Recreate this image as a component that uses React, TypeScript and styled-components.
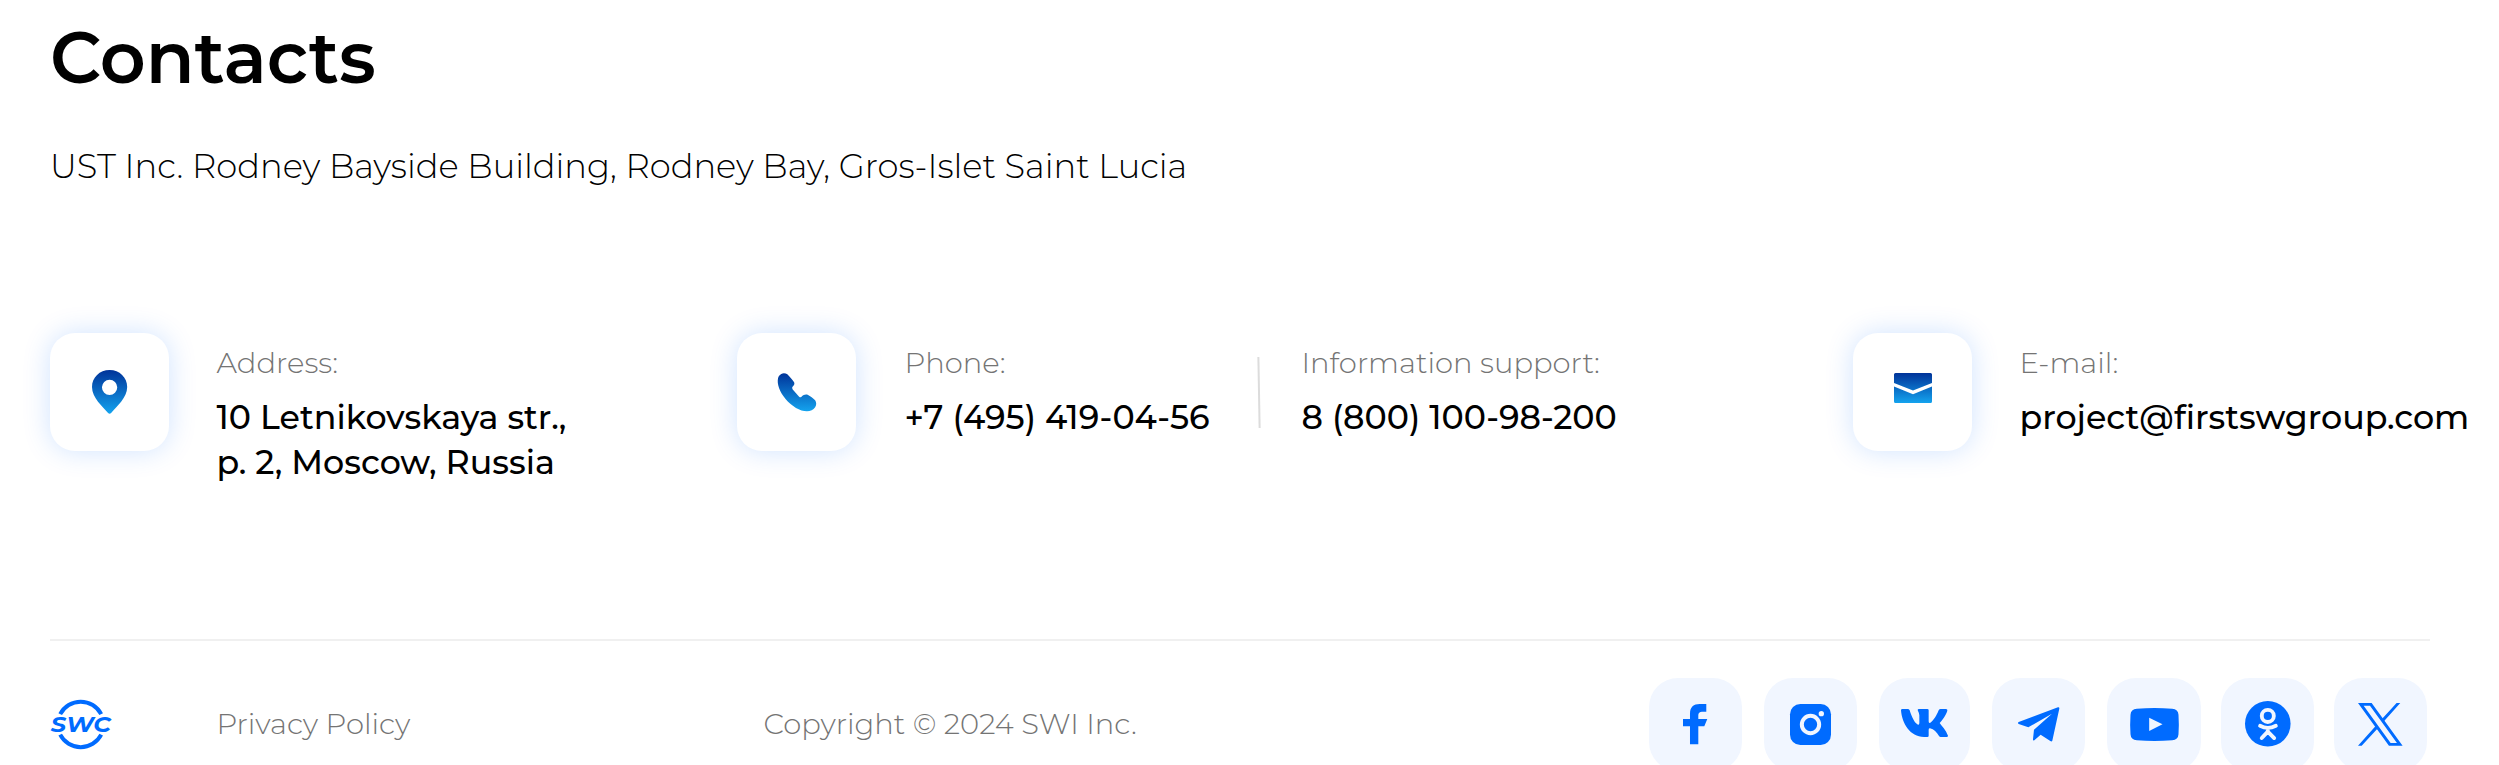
import React from "react";
import styled, { createGlobalStyle } from "styled-components";

const BLUE = "#006bff";

const GlobalStyle = createGlobalStyle`
  *, *::before, *::after { box-sizing: border-box; }
  body {
    margin: 0;
    background: #fff;
    color: #000;
    font-family: Montserrat, Inter, sans-serif;
    overflow: hidden;
  }
`;

const Page = styled.main`
  width: 2499px;
  height: 765px;
  padding: 15px 0 0 50px;
  overflow: hidden;
`;

const Title = styled.h1`
  margin: 0;
  font-size: 71.3px;
  line-height: 86px;
  font-weight: 600;
`;

const Company = styled.p`
  margin: 42px 0 0;
  font-size: 33.73px;
  line-height: 46px;
  font-weight: 300;
  white-space: nowrap;
`;

const Contacts = styled.section`
  display: grid;
  grid-template-columns: 687px 1116px auto;
  align-items: start;
  height: 306px;
  margin-top: 144px;
`;

const Contact = styled.article`
  display: flex;
  gap: 47.5px;
`;

const IconCard = styled.div`
  display: flex;
  flex: none;
  align-items: center;
  justify-content: center;
  width: 119px;
  height: 118px;
  border-radius: 25px;
  background: #fff;
  box-shadow: 0 0 28px rgba(0, 107, 255, 0.19);
`;

const Details = styled.div`
  padding-top: 12px;
  white-space: nowrap;
`;

const Label = styled.div`
  color: #747474;
  font-size: 29.05px;
  line-height: 36px;
  font-weight: 300;
`;

const Value = styled.div`
  margin-top: 14px;
  font-size: 33.3px;
  line-height: 45px;
  font-weight: 500;
`;

const Phones = styled.div`
  display: grid;
  grid-template-columns: 353px 44px auto;
  padding-left: 1px;
`;

const Divider = styled.span`
  width: 2px;
  height: 71px;
  margin-top: 24px;
  background: #dcdcdc;
  transform: rotate(-1deg);
`;

const Footer = styled.footer`
  display: grid;
  grid-template-columns: 166.5px 547px 885.5px auto;
  align-items: center;
  width: 2380px;
  height: 132px;
  padding-top: 36px;
  border-top: 2px solid #f0f0f0;
`;

const FooterText = styled.span`
  color: #747474;
  font-size: 29px;
  line-height: 36px;
  font-weight: 300;
  white-space: nowrap;
`;

const Socials = styled.nav`
  display: grid;
  grid-template-columns: 115px 115px 113px 115px 114px 113px 93px;
`;

const SocialLink = styled.a<{ $width?: number }>`
  display: flex;
  align-items: center;
  justify-content: center;
  width: ${({ $width = 93 }) => $width}px;
  height: 93px;
  border-radius: 29px;
  background: #f1f6ff;
  color: ${BLUE};
`;

const Glyph = styled.svg<{ $lift?: number }>`
  display: block;
  overflow: visible;
  margin-bottom: ${({ $lift = 0 }) => $lift * 2}px;
`;

const Wordmark = styled.text`
  font-family: Montserrat, Inter, sans-serif;
  font-size: 22px;
  font-style: italic;
  font-weight: 700;
`;

const Gradient = ({ id }: { id: string }) => (
  <defs>
    <linearGradient id={id} x1="0" y1="0" x2="0" y2="1">
      <stop offset="0" stopColor="#003399" />
      <stop offset="1" stopColor="#14a3ee" />
    </linearGradient>
  </defs>
);

const PinIcon = () => (
  <Glyph width="35.2" height="43.7" viewBox="188 181 92 131" preserveAspectRatio="none">
    <Gradient id="pin" />
    <path
      fill="url(#pin)"
      fillRule="evenodd"
      d="M234 181C260 181 280 203 280 232C280 265 252 290 238 310Q234 314 230 310C216 290 188 265 188 232C188 203 208 181 234 181ZM234 210A20 23 0 1 0 234 256A20 23 0 1 0 234 210Z"
    />
  </Glyph>
);

const PhoneIcon = () => (
  <Glyph width="38.5" height="38.3" viewBox="188 188 108 115" preserveAspectRatio="none">
    <Gradient id="phone" />
    <path
      fill="url(#phone)"
      d="M200 191C205 187 212 188 217 192C224 200 231 208 236 216C238 221 236 226 231 230C230 233 231 236 234 240L250 259C253 262 256 262 258 258C262 253 268 251 274 253C282 258 289 263 295 270C299 276 299 285 295 291C290 299 282 303 272 303C252 303 230 288 212 266C196 245 187 222 191 203C193 197 196 193 200 191Z"
    />
  </Glyph>
);

const MailIcon = () => (
  <Glyph $lift={4} width="38" height="30" viewBox="0 0 38 30">
    <Gradient id="mail" />
    <path
      fill="url(#mail)"
      d="M1.5 0H36.5Q38 0 38 1.5V10L19 17.6L0 10V1.5Q0 0 1.5 0ZM0 13.6L19 21.2L38 13.6V28.5Q38 30 36.5 30H1.5Q0 30 0 28.5Z"
    />
  </Glyph>
);

const Logo = () => (
  <Glyph $lift={0.5} width="61" height="50" viewBox="0 0 61 50" fill={BLUE}>
    <g fill="none" stroke={BLUE} strokeWidth="4">
      <path d="M10.2 15.2A23 23 0 0 1 51.2 15.2" />
      <path d="M10.2 35.6A23 23 0 0 0 51.2 35.6" />
    </g>
    <Wordmark x="0.8" y="33" textLength="60" lengthAdjust="spacingAndGlyphs">
      SWC
    </Wordmark>
  </Glyph>
);

const FacebookIcon = () => (
  <Glyph width="24.3" height="40.3" viewBox="160 191 73 121" fill="currentColor">
    <path d="M181 312V258H160V236H181V220C181 200 192 191 210 191H230V214H217C210 214 206 218 206 224V236H233L224 258H206V312Z" />
  </Glyph>
);

const InstagramIcon = () => (
  <Glyph width="41" height="41" viewBox="0 0 123 123">
    <rect width="123" height="123" rx="31" fill="currentColor" />
    <circle cx="61.5" cy="61.5" r="26" fill="none" stroke="#f1f6ff" strokeWidth="12" />
    <circle cx="94" cy="29" r="8" fill="#f1f6ff" />
  </Glyph>
);

const VkIcon = () => (
  <Glyph $lift={1} width="47" height="28" viewBox="813 207 141 84" fill="currentColor">
    <path d="M813 211Q813 207 817 207H833Q837 207 839 211C845 230 854 250 864 254Q868 255 868 249V226C867 216 864 214 863 210Q863 207 867 207H892Q896 207 896 211V244Q896 250 900 249C910 243 920 226 926 211Q928 207 932 207H948Q953 207 952 212C948 226 936 241 929 249C935 258 948 270 954 287Q954 291 950 291H932Q929 291 927 288C920 277 912 268 900 265Q896 265 896 269V287Q896 291 892 291H882C840 291 816 250 813 211Z" />
  </Glyph>
);

const TelegramIcon = () => (
  <Glyph width="41.3" height="34.3" viewBox="174 140 124 103" fill="currentColor">
    <path d="M176 185L294 141Q299 140 298 145L277 241Q275 245 271 242L242 223L223 240Q219 242 219 237L222 208L276 160L205 201L176 191Q172 188 176 185Z" />
  </Glyph>
);

const YoutubeIcon = () => (
  <Glyph width="49" height="33" viewBox="510 142 146 99">
    <path
      fill="currentColor"
      d="M530 144Q583 140 636 144Q654 145 655 162Q657 191 655 221Q654 238 636 239Q583 243 530 239Q512 238 511 221Q509 191 511 162Q512 145 530 144Z"
    />
    <path fill="#f1f6ff" d="M567 171L607 190.5L567 211Z" />
  </Glyph>
);

const OkIcon = () => (
  <Glyph width="45.6" height="45.6" viewBox="496 245.5 136 136">
    <circle cx="564" cy="313.5" r="68" fill="currentColor" />
    <g fill="none" stroke="#f1f6ff" strokeWidth="11.5" strokeLinecap="round">
      <circle cx="564" cy="290" r="18" />
      <path d="M541 319.5Q564 332 588 319.5M564 332V337L546 356M564 337L583 356" />
    </g>
  </Glyph>
);

const XIcon = () => (
  <Glyph width="44.6" height="42.7" viewBox="833 247 134 128" fill="currentColor">
    <path fillRule="evenodd" d="M833 247H874L967 375H926ZM850 255L931 367H950L869 255Z" />
    <path d="M949 247H960L911 302L905 295ZM833 375H844L894 321L888 314Z" />
  </Glyph>
);

export default function App() {
  return (
    <>
      <GlobalStyle />
      <Page>
        <Title>Contacts</Title>
        <Company>UST Inc. Rodney Bayside Building, Rodney Bay, Gros-Islet Saint Lucia</Company>

        <Contacts>
          <Contact>
            <IconCard><PinIcon /></IconCard>
            <Details>
              <Label>Address:</Label>
              <Value>10 Letnikovskaya str.,<br />p. 2, Moscow, Russia</Value>
            </Details>
          </Contact>
          <Contact>
            <IconCard><PhoneIcon /></IconCard>
            <Phones>
              <Details>
                <Label>Phone:</Label>
                <Value>+7 (495) 419-04-56</Value>
              </Details>
              <Divider />
              <Details>
                <Label>Information support:</Label>
                <Value>8 (800) 100-98-200</Value>
              </Details>
            </Phones>
          </Contact>
          <Contact>
            <IconCard><MailIcon /></IconCard>
            <Details>
              <Label>E-mail:</Label>
              <Value>project@firstswgroup.com</Value>
            </Details>
          </Contact>
        </Contacts>

        <Footer>
          <Logo />
          <FooterText>Privacy Policy</FooterText>
          <FooterText>Copyright © 2024 SWI Inc.</FooterText>
          <Socials>
            <SocialLink><FacebookIcon /></SocialLink>
            <SocialLink><InstagramIcon /></SocialLink>
            <SocialLink $width={91}><VkIcon /></SocialLink>
            <SocialLink><TelegramIcon /></SocialLink>
            <SocialLink $width={94}><YoutubeIcon /></SocialLink>
            <SocialLink><OkIcon /></SocialLink>
            <SocialLink><XIcon /></SocialLink>
          </Socials>
        </Footer>
      </Page>
    </>
  );
}
